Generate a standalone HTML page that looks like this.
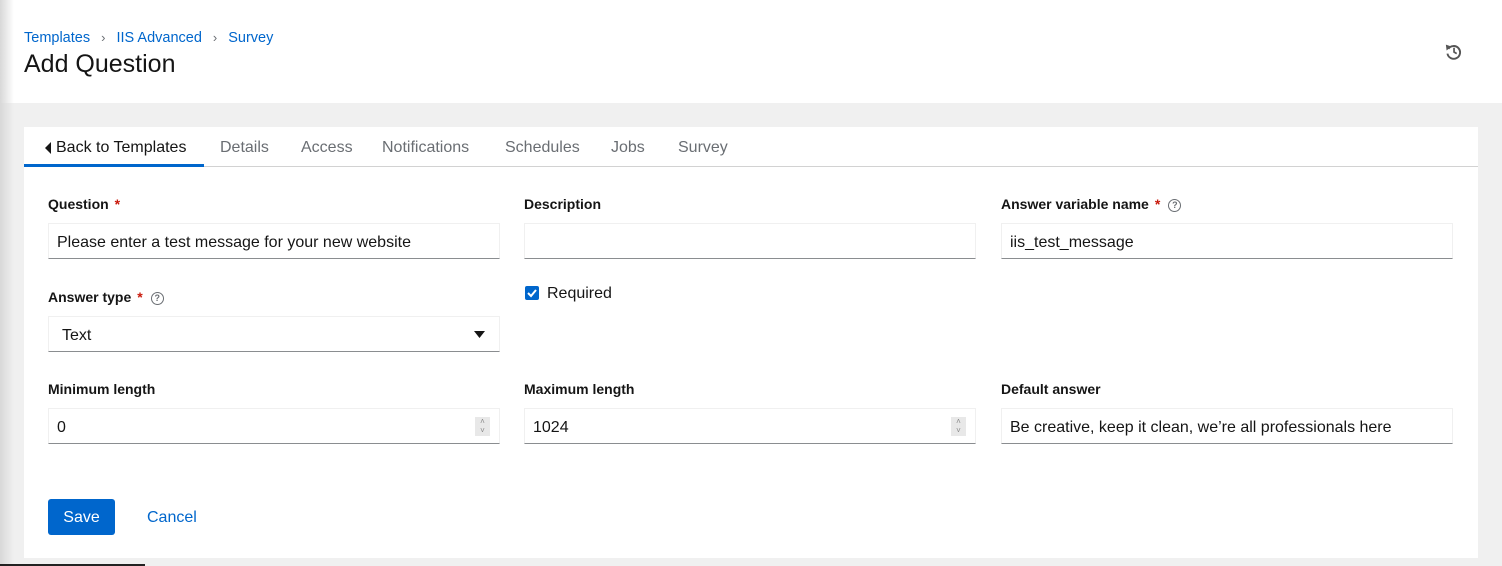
<!DOCTYPE html>
<html><head><style>
*{box-sizing:border-box;margin:0;padding:0}
body{width:1502px;height:566px;overflow:hidden;background:#f0f0f0;font-family:"Liberation Sans",sans-serif;position:relative;color:#151515}
.hdr{position:absolute;left:0;top:0;width:1502px;height:103px;background:#fff}
.shadow{position:absolute;left:0;top:0;width:14px;height:566px;background:linear-gradient(90deg,#d8d8d8,rgba(240,240,240,0));}
.bc{position:absolute;left:24px;top:30px;font-size:14.5px;color:#0066cc}
.bc span.s{color:#6a6e73;margin:0 11px;font-size:13px}
h1{position:absolute;left:24px;top:50px;font-size:25px;font-weight:normal;color:#151515}
.card{position:absolute;left:24px;top:127px;width:1454px;height:431px;background:#fff}
.tabs{position:absolute;left:0;top:0;width:1454px;height:40px;border-bottom:1px solid #d2d2d2}
.tab{position:absolute;top:12px;font-size:16px;color:#6a6e73}
.tab.a{color:#151515}
.ul{position:absolute;left:0;top:37px;width:180px;height:3px;background:#0066cc}
.lbl{position:absolute;font-size:14px;font-weight:bold;color:#151515}
.req{color:#c9190b;margin-left:6px}
.q{display:inline-block;width:13px;height:13px;border:1.3px solid #6a6e73;border-radius:50%;font-size:9px;text-align:center;line-height:11px;color:#6a6e73;margin-left:8px;vertical-align:1px;font-weight:bold}
.inp{position:absolute;width:452px;height:36px;border:1px solid #f0f0f0;border-bottom:1px solid #8a8d90;font-size:16px;padding:10px 8px 8px;color:#151515}
.spin{position:absolute;right:9px;top:8px;width:15px;height:19px;background:#e8e8e8;font-size:8px;color:#888;text-align:center;line-height:9px}
.btn{position:absolute;left:24px;top:372px;width:67px;height:36px;background:#0066cc;color:#fff;border-radius:3px;font-size:16px;text-align:center;line-height:37px}
</style></head><body>
<div class="hdr"></div>
<div class="shadow"></div>
<div class="bc">Templates<span class="s">›</span>IIS Advanced<span class="s">›</span>Survey</div>
<h1>Add Question</h1>
<svg style="position:absolute;left:1445px;top:43px" width="17" height="17" viewBox="0 0 16 16"><path d="M3.2 5.5A6 6 0 1 1 2.3 10" fill="none" stroke="#555" stroke-width="1.8"/><path d="M0.8 1.5L6 3.3 1.5 7Z" fill="#555"/><path d="M8.5 4.5v4l2.5 1.5" fill="none" stroke="#555" stroke-width="1.6"/></svg>
<div class="card">
<div class="tabs">
<svg style="position:absolute;left:21px;top:15px" width="6" height="12"><path d="M6 0L0 6 6 12Z" fill="#151515"/></svg>
<div class="tab a" style="left:32px">Back to Templates</div>
<div class="tab" style="left:196px">Details</div>
<div class="tab" style="left:277px">Access</div>
<div class="tab" style="left:358px">Notifications</div>
<div class="tab" style="left:481px">Schedules</div>
<div class="tab" style="left:587px">Jobs</div>
<div class="tab" style="left:654px">Survey</div>
<div class="ul"></div>
</div>
<div class="lbl" style="left:24px;top:69px">Question<span class="req">*</span></div>
<div class="lbl" style="left:500px;top:69px">Description</div>
<div class="lbl" style="left:977px;top:69px">Answer variable name<span class="req">*</span><span class="q">?</span></div>
<div class="inp" style="left:24px;top:96px">Please enter a test message for your new website</div>
<div class="inp" style="left:500px;top:96px"></div>
<div class="inp" style="left:977px;top:96px">iis_test_message</div>
<div class="lbl" style="left:24px;top:162px">Answer type<span class="req">*</span><span class="q">?</span></div>
<div style="position:absolute;left:501px;top:159px;width:14px;height:14px;background:#0066cc;border-radius:2px"><svg width="14" height="14"><path d="M3 7l3 3 5-6" fill="none" stroke="#fff" stroke-width="2"/></svg></div>
<div style="position:absolute;left:523px;top:158px;font-size:16px">Required</div>
<div class="inp" style="left:24px;top:189px;padding-left:13px">Text<svg style="position:absolute;right:14px;top:14px" width="11" height="7"><path d="M0 0h11L5.5 7Z" fill="#151515"/></svg></div>
<div class="lbl" style="left:24px;top:254px">Minimum length</div>
<div class="lbl" style="left:500px;top:254px">Maximum length</div>
<div class="lbl" style="left:977px;top:254px">Default answer</div>
<div class="inp" style="left:24px;top:281px">0<div class="spin">˄<br>˅</div></div>
<div class="inp" style="left:500px;top:281px">1024<div class="spin">˄<br>˅</div></div>
<div class="inp" style="left:977px;top:281px">Be creative, keep it clean, we’re all professionals here</div>
<div class="btn">Save</div>
<div style="position:absolute;left:123px;top:382px;font-size:16px;color:#0066cc">Cancel</div>
</div>
<div style="position:absolute;left:0;top:564px;width:145px;height:2px;background:#222"></div>
</body></html>
